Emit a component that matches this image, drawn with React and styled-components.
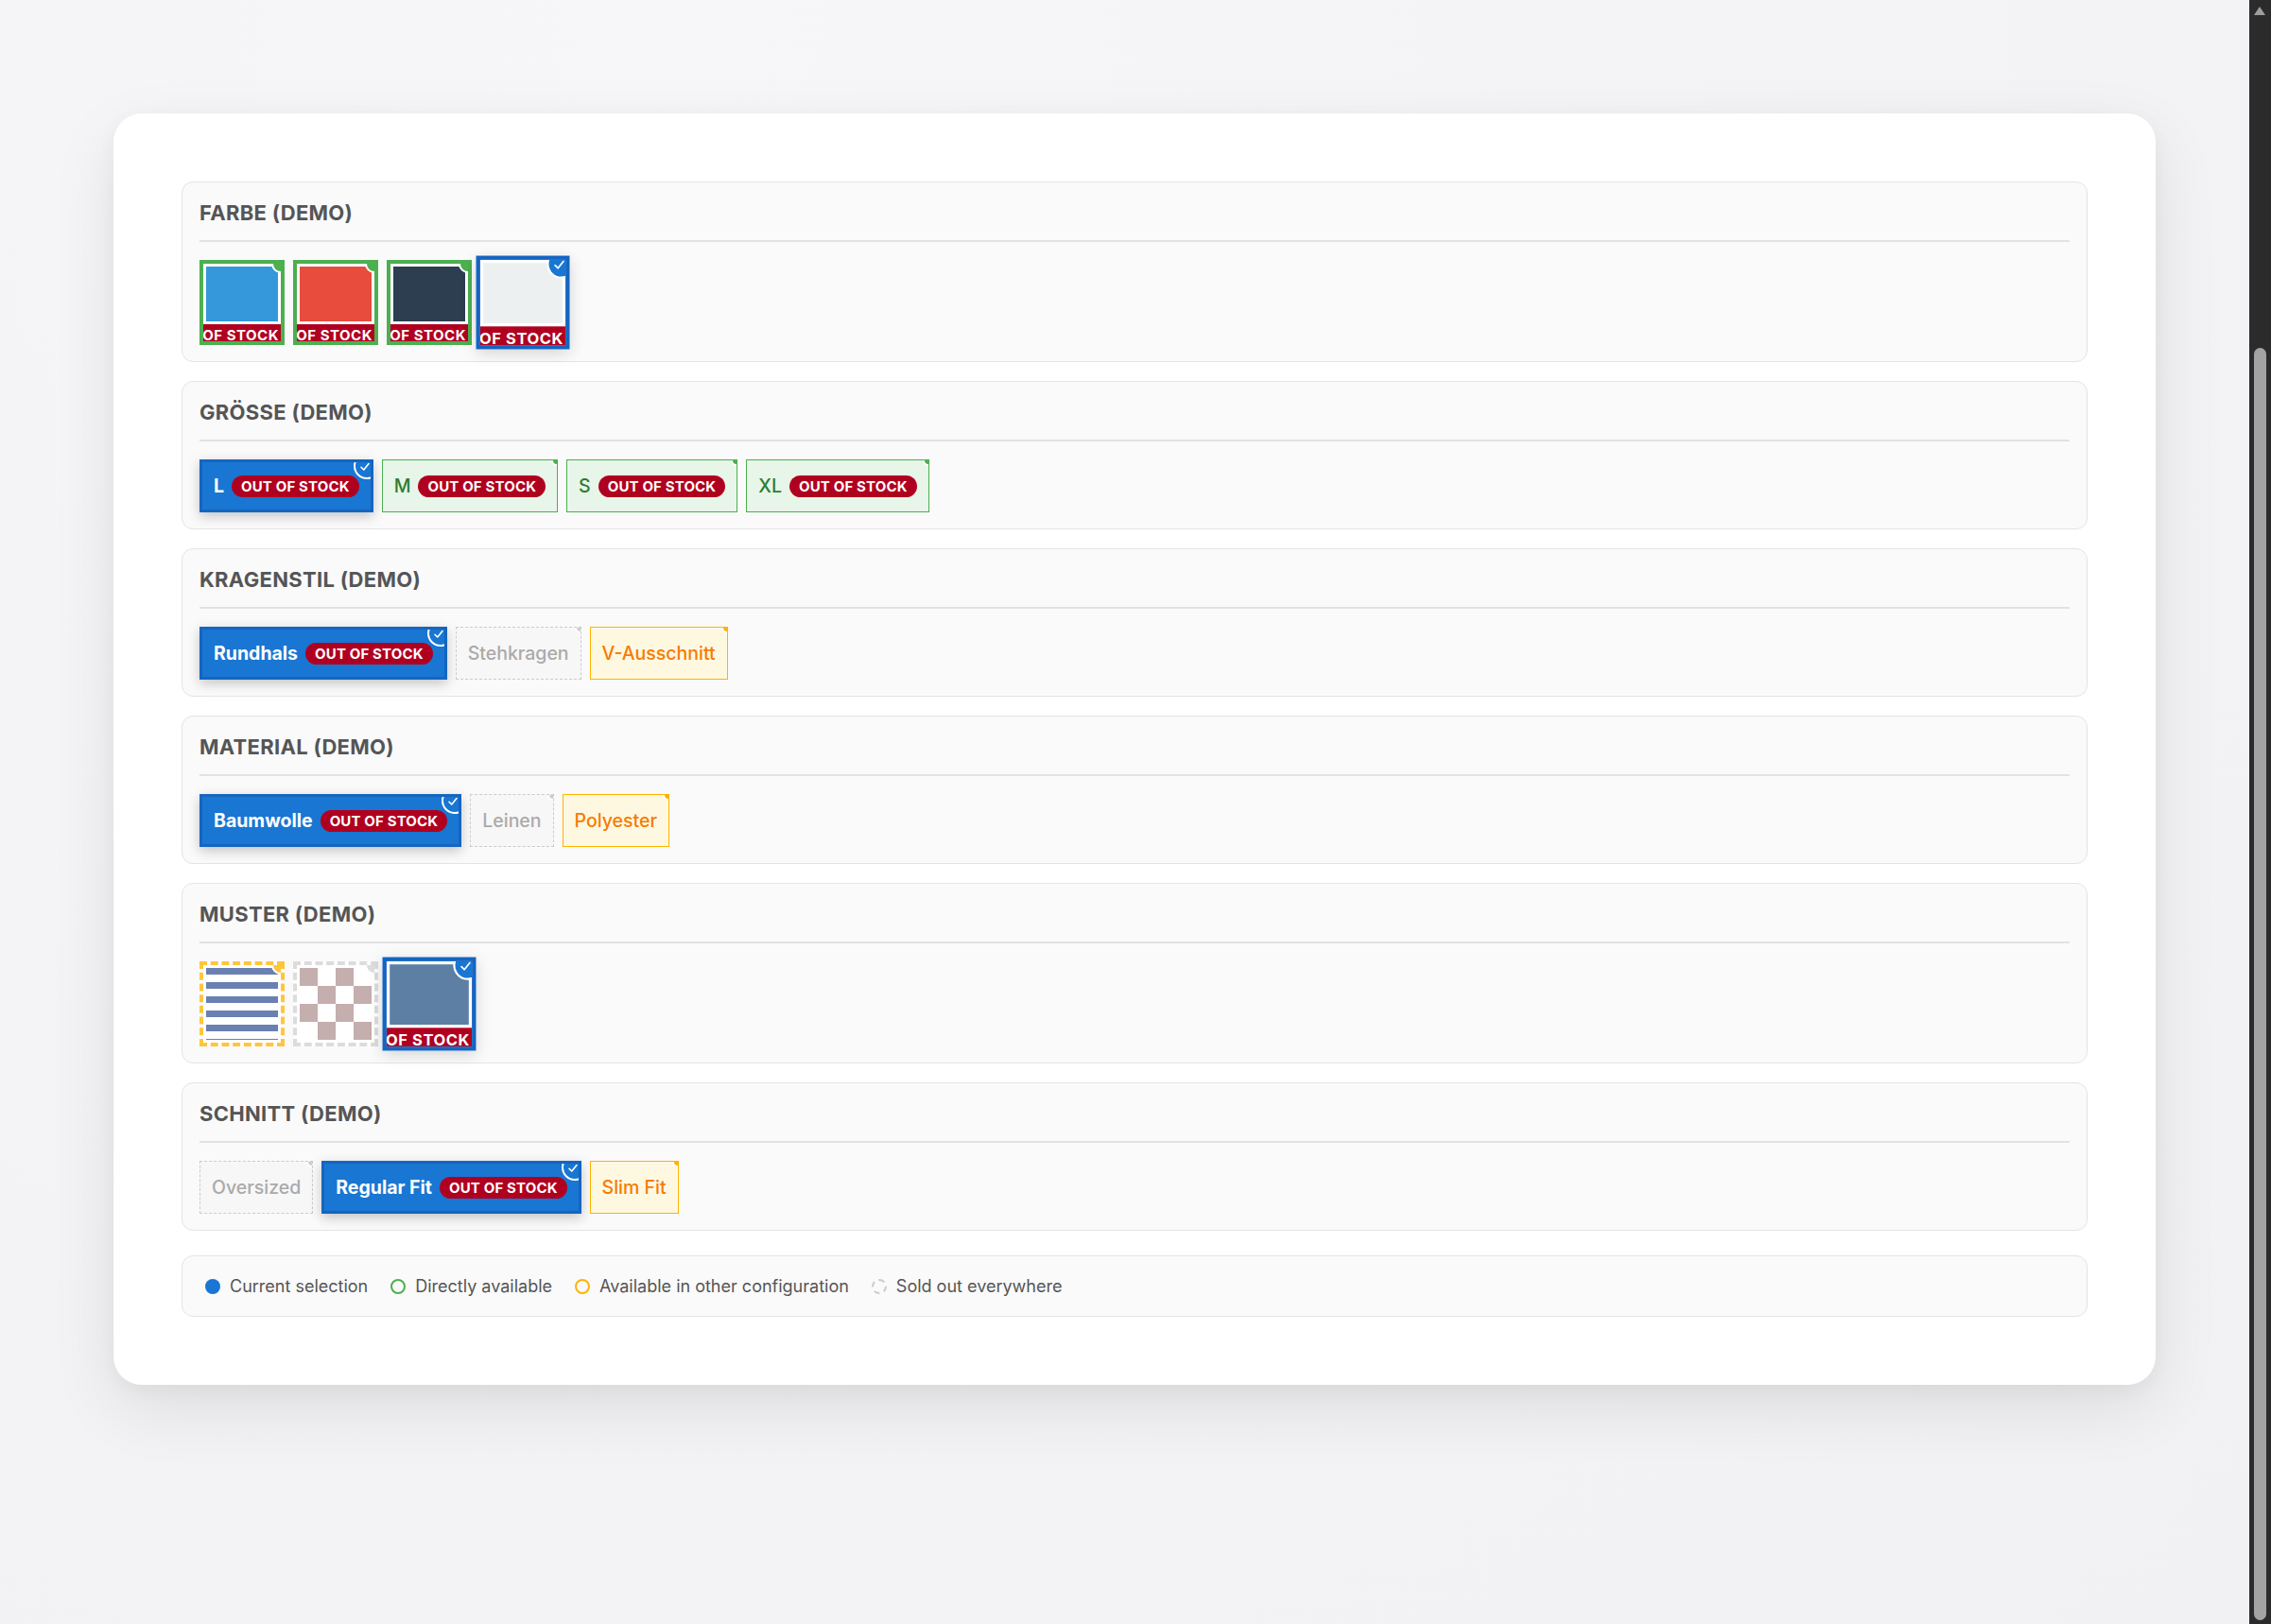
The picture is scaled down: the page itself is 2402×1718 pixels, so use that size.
import React from 'react';
import styled, { css, createGlobalStyle } from 'styled-components';

const GlobalStyle = createGlobalStyle`
  html, body {
    margin: 0;
    padding: 0;
  }
  body {
    background: #f4f4f6;
    font-family: Inter, "Noto Sans", sans-serif;
  }
  *, *::before, *::after {
    box-sizing: border-box;
  }
`;

const BLUE = '#1976d2';
const BLUE_DARK = '#1565c0';
const GREEN = '#4caf50';
const AMBER = '#ffb300';
const RED = '#b00020';

const Page = styled.div`
  min-height: 100vh;
  padding: 120px 0 120px 120px;
  background: radial-gradient(ellipse at 30% 0%, #f7f7f9 0%, #f3f3f5 60%, #f1f1f3 100%);
`;

const Card = styled.div`
  width: 2160px;
  padding: 72px;
  background: #fff;
  border-radius: 30px;
  box-shadow: 0 24px 70px rgba(0, 0, 0, 0.09), 0 6px 20px rgba(0, 0, 0, 0.04);
  display: flex;
  flex-direction: column;
  gap: 20px;
`;

const Section = styled.section`
  background: #fafafa;
  border: 1px solid #e4e4e4;
  border-radius: 12px;
  padding: 19px 18px 17px;
`;

const Title = styled.h3`
  margin: 0 0 19px;
  padding-bottom: 15px;
  border-bottom: 2px solid #e2e2e2;
  font-size: 22px;
  line-height: 27px;
  font-weight: 700;
  letter-spacing: 0.3px;
  color: #555;
`;

const Row = styled.div`
  display: flex;
  align-items: center;
  gap: 9px;
`;

/* ---------- swatches ---------- */

const swatchBorder = {
  selected: `4px solid ${BLUE_DARK}`,
  available: `4px solid ${GREEN}`,
  other: `4px dashed #ffc53d`,
  soldout: `4px dashed #dcdcdc`,
};

const Swatch = styled.div`
  position: relative;
  flex: none;
  width: 90px;
  height: 90px;
  padding: 3px;
  background: #fff;
  border: ${(p) => swatchBorder[p.$state]};
  overflow: hidden;

  ${(p) =>
    p.$state === 'selected' &&
    css`
      transform: scale(1.1);
      box-shadow: 0 4px 14px rgba(0, 0, 0, 0.16);
      z-index: 1;
    `}
`;

const Fill = styled.div`
  width: 100%;
  height: 100%;
  background: ${(p) => p.$bg};
`;

const Stripes = styled.div`
  width: 100%;
  height: 100%;
  background: repeating-linear-gradient(
    to bottom,
    #6a80b2 0 7px,
    #ffffff 7px 15px
  );
`;

const Checker = styled.div`
  width: 100%;
  height: 100%;
  background-color: #fff;
  background-image: conic-gradient(
    #fff 25%,
    #c5aeae 0 50%,
    #fff 0 75%,
    #c5aeae 0
  );
  background-size: 38px 38px;
`;

// the label is wider than the swatch; flex-end lets it overflow on the left
const StockStrip = styled.div`
  position: absolute;
  left: 0;
  right: 0;
  bottom: 0;
  height: 21px;
  border-top: 3px solid #fff;
  background: ${RED};
  color: #fff;
  font-size: 15px;
  font-weight: 700;
  line-height: 23px;
  letter-spacing: 0.5px;
  display: flex;
  justify-content: flex-end;
  align-items: flex-start;
  padding-right: 2px;
  white-space: nowrap;
  overflow: hidden;
`;

/* ---------- corner markers ---------- */

const Corner = styled.span`
  position: absolute;
  top: ${(p) => p.$offset}px;
  right: ${(p) => p.$offset}px;
  width: ${(p) => p.$size}px;
  height: ${(p) => p.$size}px;
  border-radius: 50%;
  border: 2px solid #fff;
  background: ${(p) => p.$color};
  z-index: 2;
`;

const CheckMark = styled.svg`
  position: absolute;
  left: 4px;
  top: 7px;
  width: 12px;
  height: 12px;
`;

const Marker = ({ state, small }) => {
  if (state === 'selected') {
    return (
      <Corner $size={28} $offset={-10} $color={BLUE}>
        <CheckMark viewBox="0 0 24 24" fill="none" stroke="#fff" strokeWidth="3.2" strokeLinecap="round" strokeLinejoin="round">
          <polyline points="4 12.5 9.5 18 20 5" />
        </CheckMark>
      </Corner>
    );
  }
  if (small) {
    const color = { available: GREEN, other: AMBER, soldout: '#cfcfcf' }[state];
    return <Corner $size={12} $offset={-6} $color={color} />;
  }
  const color = { available: GREEN, other: '#ffc53d', soldout: '#dcdcdc' }[state];
  return <Corner $size={20} $offset={-10} $color={color} />;
};

/* ---------- chips ---------- */

const chipLook = {
  selected: css`
    background: ${BLUE};
    border: 3px solid ${BLUE_DARK};
    color: #fff;
    font-weight: 700;
    box-shadow: 0 4px 12px rgba(0, 0, 0, 0.22);
  `,
  available: css`
    background: #e8f5e9;
    border: 1px solid ${GREEN};
    color: #2e7d32;
    font-weight: 500;
  `,
  other: css`
    background: #fff8e1;
    border: 1px solid ${AMBER};
    color: #f57c00;
    font-weight: 500;
  `,
  soldout: css`
    background: #f7f7f7;
    border: 1px dashed #cccccc;
    color: #aaaaaa;
    font-weight: 500;
  `,
};

const Chip = styled.div`
  position: relative;
  flex: none;
  display: inline-flex;
  align-items: center;
  gap: 8px;
  height: 56px;
  padding: 0 12px;
  font-size: 19.5px;
  white-space: nowrap;
  overflow: hidden;
  ${(p) => chipLook[p.$state]}
`;

const Badge = styled.span`
  display: inline-block;
  padding: 3px 10px;
  border-radius: 999px;
  background: ${RED};
  color: #fff;
  font-size: 15px;
  font-weight: 700;
  line-height: 17px;
  letter-spacing: 0.15px;
`;

/* ---------- legend ---------- */

const Legend = styled.div`
  margin-top: 6px;
  display: flex;
  align-items: center;
  gap: 24px;
  padding: 20px 24px;
  background: #fafafa;
  border: 1px solid #e4e4e4;
  border-radius: 12px;
  font-size: 18px;
  line-height: 23px;
  color: #555;
`;

const LegendItem = styled.div`
  display: flex;
  align-items: center;
  gap: 10px;
`;

const dotLook = {
  selected: css`
    background: ${BLUE};
  `,
  available: css`
    border: 2.5px solid ${GREEN};
  `,
  other: css`
    border: 2.5px solid ${AMBER};
  `,
  soldout: css`
    border: 2px dashed #cccccc;
  `,
};

const Dot = styled.span`
  flex: none;
  width: 16px;
  height: 16px;
  border-radius: 50%;
  ${(p) => dotLook[p.$state]}
`;

/* ---------- browser scrollbar seen in the shot ---------- */

const ScrollTrack = styled.div`
  position: fixed;
  top: 0;
  right: 0;
  width: 23px;
  height: 100vh;
  background: #2b2b2b;
  z-index: 10;
`;

const ScrollArrow = styled.span`
  position: absolute;
  top: 7px;
  left: 5px;
  width: 0;
  height: 0;
  border-left: 6.5px solid transparent;
  border-right: 6.5px solid transparent;
  border-bottom: 9px solid #9d9d9d;
`;

const ScrollThumb = styled.span`
  position: absolute;
  top: 368px;
  bottom: 4px;
  left: 5px;
  width: 13px;
  border-radius: 7px;
  background: #a3a3a3;
`;

/* ---------- data ---------- */

const sections = [
  {
    title: 'FARBE (DEMO)',
    type: 'swatch',
    items: [
      { state: 'available', fill: '#3498db', stock: true },
      { state: 'available', fill: '#e74c3c', stock: true },
      { state: 'available', fill: '#2c3e50', stock: true },
      { state: 'selected', fill: '#ecf0f1', stock: true },
    ],
  },
  {
    title: 'GRÖSSE (DEMO)',
    type: 'chip',
    items: [
      { state: 'selected', label: 'L', stock: true },
      { state: 'available', label: 'M', stock: true },
      { state: 'available', label: 'S', stock: true },
      { state: 'available', label: 'XL', stock: true },
    ],
  },
  {
    title: 'KRAGENSTIL (DEMO)',
    type: 'chip',
    items: [
      { state: 'selected', label: 'Rundhals', stock: true },
      { state: 'soldout', label: 'Stehkragen' },
      { state: 'other', label: 'V-Ausschnitt' },
    ],
  },
  {
    title: 'MATERIAL (DEMO)',
    type: 'chip',
    items: [
      { state: 'selected', label: 'Baumwolle', stock: true },
      { state: 'soldout', label: 'Leinen' },
      { state: 'other', label: 'Polyester' },
    ],
  },
  {
    title: 'MUSTER (DEMO)',
    type: 'swatch',
    items: [
      { state: 'other', pattern: 'stripes' },
      { state: 'soldout', pattern: 'checker' },
      { state: 'selected', fill: '#5d7fa3', stock: true },
    ],
  },
  {
    title: 'SCHNITT (DEMO)',
    type: 'chip',
    items: [
      { state: 'soldout', label: 'Oversized' },
      { state: 'selected', label: 'Regular Fit', stock: true },
      { state: 'other', label: 'Slim Fit' },
    ],
  },
];

const legend = [
  { state: 'selected', text: 'Current selection' },
  { state: 'available', text: 'Directly available' },
  { state: 'other', text: 'Available in other configuration' },
  { state: 'soldout', text: 'Sold out everywhere' },
];

const SwatchItem = ({ item }) => (
  <Swatch $state={item.state}>
    {item.pattern === 'stripes' ? <Stripes /> : item.pattern === 'checker' ? <Checker /> : <Fill $bg={item.fill} />}
    {item.stock && <StockStrip>OUT OF STOCK</StockStrip>}
    <Marker state={item.state} />
  </Swatch>
);

const ChipItem = ({ item }) => (
  <Chip $state={item.state}>
    {item.label}
    {item.stock && <Badge>OUT OF STOCK</Badge>}
    <Marker state={item.state} small />
  </Chip>
);

export default function App() {
  return (
    <>
      <GlobalStyle />
      <Page>
        <Card>
          {sections.map((s) => (
            <Section key={s.title}>
              <Title>{s.title}</Title>
              <Row>
                {s.items.map((item, i) =>
                  s.type === 'swatch' ? <SwatchItem key={i} item={item} /> : <ChipItem key={i} item={item} />
                )}
              </Row>
            </Section>
          ))}
          <Legend>
            {legend.map((l) => (
              <LegendItem key={l.state}>
                <Dot $state={l.state} />
                {l.text}
              </LegendItem>
            ))}
          </Legend>
        </Card>
      </Page>
      <ScrollTrack>
        <ScrollArrow />
        <ScrollThumb />
      </ScrollTrack>
    </>
  );
}
